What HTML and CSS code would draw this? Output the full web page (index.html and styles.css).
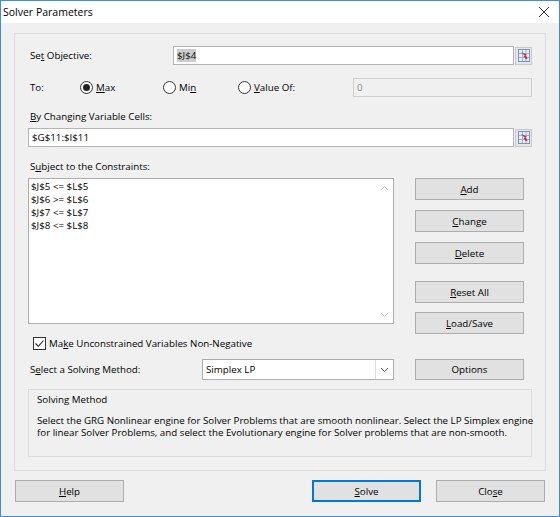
FILE: index.html
```html
<!DOCTYPE html>
<html lang="en">
<head>
  <meta charset="UTF-8">
  <title>Solver Parameters</title>
  <link rel="stylesheet" href="styles.css">
</head>
<body>
  <div class="window">
    <div class="titlebar">
      <span class="title">Solver Parameters</span>
      <svg class="close-x" width="12" height="12" viewBox="0 0 12 12">
        <path d="M1 1 L11 11 M11 1 L1 11" stroke="#333" stroke-width="1" fill="none"/>
      </svg>
    </div>

    <div class="panel">
      <div class="row row-objective">
        <span class="lbl lbl-objective">Se<u>t</u> Objective:</span>
        <div class="textbox"><span class="selected">$J$4</span></div>
        <button class="ref-btn" title="Select range">
          <svg width="12" height="13" viewBox="0 0 12 13">
            <rect x="0.5" y="0.5" width="11" height="12" fill="#e4ecf6" stroke="#7896bb"/>
            <path d="M1 4.5 H11 M1 8.5 H11 M4.5 1 V12 M8 1 V12" stroke="#9db3cf" stroke-width="1"/>
            <path d="M3 3 L7 7 L5.5 7 L8 10.5 L9.5 9.5 L7.5 6 L9 5.5 Z" fill="#d7262b"/>
          </svg>
        </button>
      </div>

      <div class="row row-to">
        <span class="lbl lbl-to">To:</span>
        <label class="radio radio-max"><span class="dot checked"></span><span><u>M</u>ax</span></label>
        <label class="radio radio-min"><span class="dot"></span><span>Mi<u>n</u></span></label>
        <label class="radio radio-value"><span class="dot"></span><span><u>V</u>alue Of:</span></label>
        <div class="textbox disabled">0</div>
      </div>

      <div class="caption"><u>B</u>y Changing Variable Cells:</div>
      <div class="row row-cells">
        <div class="textbox">$G$11:$I$11</div>
        <button class="ref-btn" title="Select range">
          <svg width="12" height="13" viewBox="0 0 12 13">
            <rect x="0.5" y="0.5" width="11" height="12" fill="#e4ecf6" stroke="#7896bb"/>
            <path d="M1 4.5 H11 M1 8.5 H11 M4.5 1 V12 M8 1 V12" stroke="#9db3cf" stroke-width="1"/>
            <path d="M3 3 L7 7 L5.5 7 L8 10.5 L9.5 9.5 L7.5 6 L9 5.5 Z" fill="#d7262b"/>
          </svg>
        </button>
      </div>

      <div class="caption">S<u>u</u>bject to the Constraints:</div>
      <div class="constraints">
        <div class="listbox">
          <ul class="items">
            <li>$J$5 &lt;= $L$5</li>
            <li>$J$6 &gt;= $L$6</li>
            <li>$J$7 &lt;= $L$7</li>
            <li>$J$8 &lt;= $L$8</li>
          </ul>
          <div class="scrollbar">
            <svg width="9" height="6" viewBox="0 0 9 6"><path d="M1 5 L4.5 1.5 L8 5" stroke="#c2c2c2" fill="none"/></svg>
            <svg width="9" height="6" viewBox="0 0 9 6"><path d="M1 1 L4.5 4.5 L8 1" stroke="#c2c2c2" fill="none"/></svg>
          </div>
        </div>
        <div class="side-buttons">
          <button class="btn"><u>A</u>dd</button>
          <button class="btn gap-10"><u>C</u>hange</button>
          <button class="btn gap-10"><u>D</u>elete</button>
          <button class="btn gap-17"><u>R</u>eset All</button>
          <button class="btn gap-9"><u>L</u>oad/Save</button>
        </div>
      </div>

      <label class="check-row">
        <span class="checkbox">
          <svg width="11" height="11" viewBox="0 0 11 11"><path d="M1.5 5.5 L4.3 8.3 L9.5 2.5" stroke="#222" stroke-width="1.1" fill="none"/></svg>
        </span>
        <span>Ma<u>k</u>e Unconstrained Variables Non-Negative</span>
      </label>

      <div class="row row-method">
        <span class="lbl lbl-method">S<u>e</u>lect a Solving Method:</span>
        <div class="select">
          <span class="select-value">Simplex LP</span>
          <span class="select-arrow">
            <svg width="9" height="6" viewBox="0 0 9 6"><path d="M1 1 L4.5 4.5 L8 1" stroke="#555" fill="none"/></svg>
          </span>
        </div>
        <button class="btn">Options</button>
      </div>

      <div class="method-box">
        <div class="method-title">Solving Method</div>
        <p class="method-text">Select the GRG Nonlinear engine for Solver Problems that are smooth nonlinear. Select the LP Simplex engine<br>for linear Solver Problems, and select the Evolutionary engine for Solver problems that are non-smooth.</p>
      </div>
    </div>

    <div class="footer">
      <button class="btn"><u>H</u>elp</button>
      <div class="footer-right">
        <button class="btn default"><u>S</u>olve</button>
        <button class="btn">Clo<u>s</u>e</button>
      </div>
    </div>
  </div>
</body>
</html>
```

FILE: styles.css
```css
* { margin: 0; padding: 0; box-sizing: border-box; }

body {
  font-family: "Open Sans", "Noto Sans", sans-serif;
  font-size: 9.75px;
  color: #000;
  background: #f0f0f0;
}

u { text-decoration-thickness: 1px; text-underline-offset: 1px; }

.window {
  width: 560px; height: 517px;
  border: 1px solid #3d8fd8;
  background: #f0f0f0;
}

.titlebar {
  height: 22px; background: #fff;
  display: flex; align-items: center; justify-content: space-between;
  padding: 0 9px 0 2px;
}

.title { font-size: 10.5px; color: #000; }

.panel {
  margin: 10px 13px 0 13px;
  height: 438px;
  border: 1px solid #dcdcdc;
  padding: 0 13px;
}

.row { display: flex; align-items: center; }

.lbl { padding-left: 2px; flex-shrink: 0; }
.lbl-objective { width: 145px; }
.lbl-to { width: 52px; }
.lbl-method { width: 174px; }

.row-objective { margin-top: 12px; height: 19px; }
.row-to { margin-top: 13px; height: 19px; }
.row-cells { margin-top: 4px; height: 19px; }
.row-method { margin-top: 9px; height: 21px; }

.textbox {
  flex: 1; height: 19px;
  border: 1px solid #b4b4b4; background: #fff;
  padding: 0 3px; line-height: 17px;
  white-space: nowrap;
}

.textbox.disabled { background: #f0f0f0; border-color: #cfcfcf; color: #8a8a8a; }

.selected { background: #cccccc; color: #111; }

.ref-btn {
  width: 17px; height: 18px; margin-left: 1px; flex-shrink: 0;
  border: 1px solid #c9c9c9; background: #e6e6e6;
  display: flex; align-items: center; justify-content: center;
}

.radio { display: flex; align-items: center; flex-shrink: 0; }
.radio-max { width: 83px; }
.radio-min { width: 75px; }
.radio-value { width: 115px; }

.dot {
  width: 13px; height: 13px; border-radius: 50%;
  border: 1px solid #333; background: #fff;
  margin-right: 3px; position: relative;
}

.dot.checked::after {
  content: ""; position: absolute; left: 2px; top: 2px;
  width: 7px; height: 7px; border-radius: 50%; background: #222;
}

.caption { margin-top: 13px; padding-left: 2px; height: 14px; line-height: 14px; }

.constraints { display: flex; margin-top: 4px; }

.listbox {
  width: 366px; height: 146px;
  border: 1px solid #adadad; background: #fff;
  display: flex;
}

.items { flex: 1; list-style: none; padding: 1px 2px; line-height: 13px; }

.scrollbar {
  width: 17px; display: flex; flex-direction: column;
  justify-content: space-between; align-items: center;
  padding: 6px 0 5px;
}

.side-buttons { display: flex; flex-direction: column; margin-left: 21px; }

.btn {
  width: 109px; height: 22px;
  border: 1px solid #adadad; background: #e1e1e1;
  font: inherit; color: #000;
}

.gap-9 { margin-top: 9px; }
.gap-10 { margin-top: 10px; }
.gap-17 { margin-top: 17px; }

.check-row {
  display: flex; align-items: center; gap: 3px;
  margin-top: 3px; margin-left: 5px; height: 13px;
}

.checkbox {
  width: 13px; height: 13px; border: 1px solid #333; background: #fff;
  display: flex; align-items: center; justify-content: center;
}

.select {
  width: 192px; height: 21px; display: flex;
  border: 1px solid #adadad; background: #fff;
}

.select-value { flex: 1; padding-left: 3px; line-height: 19px; }

.select-arrow {
  width: 18px; border-left: 1px solid #dcdcdc;
  display: flex; align-items: center; justify-content: center;
}

.row-method .btn { margin-left: 21px; height: 21px; }

.method-box {
  margin-top: 9px; height: 68px;
  border: 1px solid #dcdcdc;
  padding: 3px 8px 0;
}

.method-title { line-height: 14px; }

.method-text { margin-top: 8px; line-height: 12px; white-space: nowrap; }

.footer {
  display: flex; justify-content: space-between;
  margin-top: 9px; padding: 0 14px 0 14px;
}

.footer-right { display: flex; gap: 15px; }

.btn.default { border-color: #0078d7; box-shadow: inset 0 0 0 1px #0078d7; }
```
